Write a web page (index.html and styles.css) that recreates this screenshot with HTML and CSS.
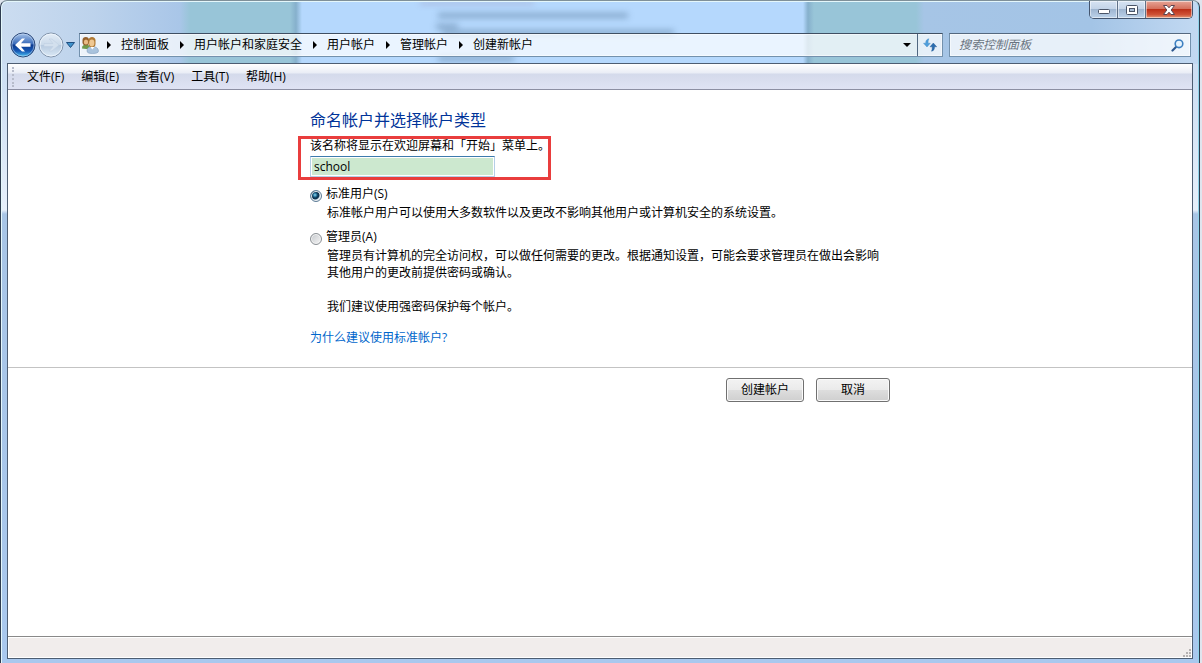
FILE: index.html
```html
<!DOCTYPE html>
<html lang="zh-CN">
<head>
    <meta charset="UTF-8">
    <meta name="viewport" content="width=device-width, initial-scale=1.0">
    <title>创建新帐户</title>
    <link rel="stylesheet" href="styles.css">
</head>
<body>
    <div class="window">
        <div class="glass">
            <span class="smudge smudge-a"></span>
            <span class="smudge smudge-b"></span>
            <span class="smudge smudge-c"></span>
            <span class="smudge smudge-d"></span>
            <span class="smudge smudge-e"></span>
        </div>

        <header class="titlebar">
            <div class="caption">
                <button type="button" class="caption-btn" aria-label="最小化">
                    <svg width="14" height="10" viewBox="0 0 14 10"><rect x="1.500" y="4.500" width="11" height="4" rx="1" fill="#fff" stroke="#4a5568"/></svg>
                </button>
                <button type="button" class="caption-btn" aria-label="最大化">
                    <svg width="14" height="10" viewBox="0 0 14 10"><rect x="1.500" y="0.500" width="11" height="9" rx="1" fill="#fff" stroke="#4a5568"/><rect x="4.500" y="3.500" width="5" height="3" fill="#a9bdd6" stroke="#4a5568"/></svg>
                </button>
                <button type="button" class="caption-btn close" aria-label="关闭">
                    <svg width="14" height="12" viewBox="0 0 14 12"><path d="M1.500 1.500h3.500l2 2.300 2-2.300h3.500L9.200 6l3.300 4.500H9L7 8.200 5 10.500H1.500L4.800 6z" fill="#fff" stroke="#5b4450"/></svg>
                </button>
            </div>
        </header>

        <div class="navbar">
            <div class="nav-buttons">
                <button type="button" class="round" aria-label="后退">
                    <svg width="26" height="26" viewBox="0 0 26 26">
                        <defs>
                            <linearGradient id="backFill" x1="0" y1="0" x2="0" y2="1">
                                <stop offset="0" stop-color="#a9c5ea"/>
                                <stop offset="0.450" stop-color="#3b6cba"/>
                                <stop offset="0.500" stop-color="#0c3a8f"/>
                                <stop offset="0.750" stop-color="#1658b5"/>
                                <stop offset="1" stop-color="#4fc8f5"/>
                            </linearGradient>
                        </defs>
                        <circle cx="13" cy="13" r="12" fill="url(#backFill)" stroke="#2c4878"/>
                        <circle cx="13" cy="13" r="11" fill="none" stroke="#cfe2f8" stroke-opacity="0.500"/>
                        <path d="M5 13l7-6.500h3l-4 4.700h9.500v3.600H11l4 4.700h-3z" fill="#fff"/>
                    </svg>
                </button>
                <button type="button" class="round" aria-label="前进">
                    <svg width="26" height="26" viewBox="0 0 26 26">
                        <defs>
                            <linearGradient id="fwdFill" x1="0" y1="0" x2="0" y2="1">
                                <stop offset="0" stop-color="#e4edf7"/>
                                <stop offset="0.480" stop-color="#cbdaea"/>
                                <stop offset="0.520" stop-color="#b8cbe0"/>
                                <stop offset="1" stop-color="#dbe9f6"/>
                            </linearGradient>
                        </defs>
                        <circle cx="13" cy="13" r="12" fill="url(#fwdFill)" stroke="#8193aa"/>
                        <circle cx="13" cy="13" r="11" fill="none" stroke="#f4f9ff" stroke-opacity="0.700"/>
                        <path d="M21 13l-7-6h-3l4 4.500H6v3h9L11 19h3z" fill="#d3e0ee" stroke="#bccde0" stroke-width="0.500"/>
                    </svg>
                </button>
                <button type="button" class="recent" aria-label="最近的页面">
                    <svg width="9" height="6" viewBox="0 0 9 6"><path d="M0.500 0.500h8L4.500 5.500z" fill="#3f93cc" stroke="#1f4e80"/></svg>
                </button>
            </div>

            <div class="address">
                <svg class="users" width="18" height="18" viewBox="0 0 18 18">
                    <path d="M1 12.500C1 9.500 2.500 8.500 5 8.500s4.500 1.500 4.500 5z" fill="#6f9a4c"/>
                    <path d="M1.500 4C1.500 2 3 1 4.800 1S8 2 8 4v2.500C8 8.500 6.500 9.500 4.800 9.500S1.500 8.500 1.500 6.500z" fill="#94602c"/>
                    <ellipse cx="5" cy="6" rx="2.200" ry="2.600" fill="#e9bb85"/>
                    <path d="M6 15c0-3.500 2.500-4.500 5.500-4.500s6 1.500 6 4.500c0 2-3 2.500-6 2.500S6 17 6 15z" fill="#a9c3dd" stroke="#7897b8" stroke-width="0.500"/>
                    <path d="M7.500 4.500C7.500 2.200 9 1 11 1s3.500 1.200 3.500 3.500V8c0 2-1.500 3.500-3.500 3.500S7.500 10 7.500 8z" fill="#b07a34"/>
                    <ellipse cx="10.800" cy="7" rx="2.600" ry="3.400" fill="#efc892"/>
                    <path d="M9.500 11l1.700 2.500L13.500 11z" fill="#fff"/>
                </svg>
                <nav class="crumbs">
                    <a href="#">控制面板</a>
                    <a href="#">用户帐户和家庭安全</a>
                    <a href="#">用户帐户</a>
                    <a href="#">管理帐户</a>
                    <a href="#">创建新帐户</a>
                </nav>
                <button type="button" class="drop" aria-label="以前的位置">
                    <svg width="8" height="4" viewBox="0 0 8 4"><path d="M0 0h8L4 4z" fill="#000"/></svg>
                </button>
                <button type="button" class="refresh" aria-label="刷新">
                    <svg width="14" height="14" viewBox="0 0 14 14">
                        <path d="M6 0.800C3.500 1.200 2.700 2.700 2.700 5.200H0.500L4 9l3.300-3.800H5.100C5 3.500 5.200 2 6 0.800z" fill="#4f9edb" stroke="#3a86c2" stroke-width="0.400"/>
                        <path d="M8.500 13.200c2.500-0.400 3-1.900 3-4.400h2.200L10.300 5 7 8.800h2.200c0 1.700 0 3.200-0.700 4.400z" fill="#2b6cae" stroke="#1d5391" stroke-width="0.400"/>
                    </svg>
                </button>
            </div>

            <form class="search">
                <input type="text" aria-label="搜索控制面板" placeholder="搜索控制面板">
                <svg width="13" height="13" viewBox="0 0 13 13">
                    <path d="M1.500 11.500L5.500 7.500" stroke="#2d568c" stroke-width="2.200" stroke-linecap="round"/>
                    <circle cx="8" cy="4.800" r="3.800" fill="#e6f3fd" stroke="#3c7fc0" stroke-width="1.600"/>
                </svg>
            </form>
        </div>

        <div class="client">
            <nav class="menubar">
                <button type="button">文件(F)</button>
                <button type="button">编辑(E)</button>
                <button type="button">查看(V)</button>
                <button type="button">工具(T)</button>
                <button type="button">帮助(H)</button>
            </nav>

            <main>
                <form class="account">
                    <section class="column">
                        <h1>命名帐户并选择帐户类型</h1>
                        <div class="name-field">
                            <label for="accountName">该名称将显示在欢迎屏幕和「开始」菜单上。</label>
                            <input type="text" id="accountName" name="accountName" value="school">
                        </div>

                        <div class="option">
                            <input type="radio" id="standard" name="type" checked>
                            <label for="standard">标准用户(S)</label>
                        </div>
                        <p>标准帐户用户可以使用大多数软件以及更改不影响其他用户或计算机安全的系统设置。</p>

                        <div class="option">
                            <input type="radio" id="admin" name="type">
                            <label for="admin">管理员(A)</label>
                        </div>
                        <p>管理员有计算机的完全访问权，可以做任何需要的更改。根据通知设置，可能会要求管理员在做出会影响<br>其他用户的更改前提供密码或确认。</p>
                        <p class="advice">我们建议使用强密码保护每个帐户。</p>

                        <a class="help" href="#">为什么建议使用标准帐户?</a>
                    </section>

                    <div class="actions">
                        <div class="column buttons">
                            <button type="button" class="create">创建帐户</button>
                            <button type="button">取消</button>
                        </div>
                    </div>
                </form>
            </main>

            <footer class="statusbar">
                <svg width="9" height="9" viewBox="0 0 9 9" fill="#b5b2b2">
                    <path d="M6 0h2v2H6zM3 3h2v2H3zM6 3h2v2H6zM0 6h2v2H0zM3 6h2v2H3zM6 6h2v2H6z"/>
                </svg>
            </footer>
        </div>
    </div>
</body>
</html>
```
FILE: styles.css
```css
* {
    box-sizing: border-box;
}
body {
    margin: 0;
    background: #dfe5ee;
    font-family: "Open Sans", "Noto Sans CJK SC", sans-serif;
    font-size: 12px;
    line-height: 16px;
    color: #000;
}
button, input {
    font: inherit;
    color: inherit;
}
button {
    padding: 0;
    border: none;
    background: none;
}
svg {
    display: block;
}

/* window frame */
.window {
    position: relative;
    display: flex;
    flex-direction: column;
    min-height: 100vh;
    margin-right: 2px;
    padding: 0 6px 4px;
    border: 1px solid #2f3c50;
    border-top-color: #7f9099;
    border-bottom: none;
    border-radius: 7px 7px 0 0;
    background: linear-gradient(#c8dbf0 0, #cfe0f4 90px, #e6effa 209px, #a8c5e6 213px, #a9c8ee 100%);
    box-shadow: inset 1px 1px #e4f7fb, inset -1px 0 #8fd3ea;
}
.glass {
    position: absolute;
    top: 1px;
    left: 1px;
    right: 1px;
    height: 62px;
    overflow: hidden;
    border-radius: 6px 6px 0 0;
    background: linear-gradient(90deg, #cbdcf0 0, #bdd3ec 90px, #a9c6e8 178px, #98c5d8 188px, #98c5d8 288px, #86b0cc 294px, #b5d8fd 300px, #b5d8fd 801px, #86b0cc 806px, #98c5d8 812px, #98c5d8 914px, #a6c5e6 922px, #a3c4e6 1090px, #c2d9f2 100%);
}
.smudge {
    position: absolute;
    height: 5px;
    background: #537596;
    opacity: 0.5;
    filter: blur(3px);
}
.smudge-a {
    top: 0;
    left: 418px;
    width: 114px;
    height: 2px;
    background: #8c6c92;
}
.smudge-b {
    top: 11px;
    left: 436px;
    width: 190px;
}
.smudge-c {
    top: 22px;
    left: 434px;
    width: 22px;
}
.smudge-d {
    top: 28px;
    left: 440px;
    width: 232px;
}
.smudge-e {
    top: 54px;
    left: 436px;
    width: 76px;
}

/* caption buttons */
.titlebar {
    position: relative;
    display: flex;
    justify-content: flex-end;
    height: 32px;
}
.caption {
    display: flex;
    height: 18px;
    border: 1px solid #44556e;
    border-top: none;
    border-radius: 0 0 5px 5px;
    overflow: hidden;
}
.caption-btn {
    display: flex;
    align-items: center;
    justify-content: center;
    width: 28px;
    border-right: 1px solid #5f7188;
    background: linear-gradient(#d6e3f2 0, #c3d4e8 45%, #9fb6d1 50%, #bcd2ea 100%);
    box-shadow: inset 0 0 0 1px rgba(255, 255, 255, 0.5);
}
.caption-btn.close {
    width: 46px;
    border-right: none;
    background: linear-gradient(#e6a597 0, #d5705c 45%, #bb3018 50%, #cf5236 80%, #e39a78 100%);
}

/* address row */
.navbar {
    position: relative;
    display: flex;
    align-items: center;
    height: 24px;
    margin-bottom: 6px;
    padding: 0 2px 0 3px;
}
.nav-buttons {
    display: flex;
    align-items: center;
    gap: 2px;
    width: 69px;
}
.round {
    flex: none;
    border-radius: 50%;
}
.address {
    display: flex;
    align-items: center;
    flex: 1;
    height: 24px;
    border: 1px solid #7391ad;
    border-top-color: #3f4f63;
    background: rgba(255, 255, 255, 0.72);
    box-shadow: inset 0 0 0 1px rgba(255, 255, 255, 0.5);
}
.users {
    margin-left: 1px;
}
.crumbs {
    display: flex;
    flex: 1;
}
.crumbs a {
    display: flex;
    align-items: center;
    color: #000;
    text-decoration: none;
}
.crumbs a::before {
    content: "";
    margin: 0 10px 0 8px;
    border: 4px solid transparent;
    border-left-color: #000;
    border-right: none;
}
.crumbs a + a::before {
    margin-left: 11px;
}
.drop, .refresh {
    display: flex;
    align-items: center;
    justify-content: center;
    height: 22px;
}
.drop {
    width: 20px;
}
.refresh {
    width: 25px;
    border-left: 1px solid #4f6780;
}
.search {
    display: flex;
    align-items: center;
    width: 242px;
    height: 24px;
    margin-left: 6px;
    padding-right: 6px;
    border: 1px solid #7391ad;
    border-top-color: #54687f;
    background: rgba(255, 255, 255, 0.74);
    box-shadow: inset 0 0 0 1px rgba(255, 255, 255, 0.5);
}
.search input {
    flex: 1;
    min-width: 0;
    padding: 0 9px;
    border: none;
    outline: none;
    background: none;
}
.search input::placeholder {
    color: #6a7480;
    font-style: italic;
}

/* client area */
.client {
    position: relative;
    display: flex;
    flex: 1;
    flex-direction: column;
    border: 1px solid #4d5d72;
    background: #fff;
}
.menubar {
    position: relative;
    display: flex;
    gap: 17px;
    height: 26px;
    padding-left: 19px;
    border-bottom: 1px solid #8c8fa3;
    background: linear-gradient(#fff 0, #e9edf6 9px, #d4daeb 10px, #dfe3f4 100%);
}
.menubar::before {
    content: "";
    position: absolute;
    top: 3px;
    bottom: 2px;
    left: 4px;
    border-left: 2px dotted #b7bccb;
}
main {
    flex: 1;
}
.column {
    width: 580px;
    max-width: 100%;
    margin: 0 auto;
}
.account > .column {
    padding: 18px 0 21px;
}
h1 {
    margin: 0 0 6px;
    color: #003399;
    font-size: 16px;
    font-weight: normal;
    line-height: 24px;
}
.name-field {
    position: relative;
    width: 241px;
    margin-bottom: 9px;
}
.name-field::after {
    content: "";
    position: absolute;
    inset: -2px 0 -3px -12px;
    border: 3px solid #e93d3d;
    pointer-events: none;
}
.name-field label {
    display: block;
    white-space: nowrap;
}
.name-field input {
    display: block;
    width: 185px;
    height: 21px;
    margin-top: 2px;
    padding: 0 3px;
    border: 1px solid #b5cfe7;
    border-top-color: #3d7bad;
    outline: none;
    background: #cce8cf;
    box-shadow: inset 0 0 0 1px #fff;
}
.option {
    display: flex;
    align-items: flex-end;
    gap: 4px;
    margin-bottom: 2px;
}
.option input {
    appearance: none;
    width: 12px;
    height: 12px;
    margin: 0;
    border: 1px solid #8a8f94;
    border-radius: 50%;
    background: linear-gradient(135deg, #c4c8cc, #f6f6f6);
    box-shadow: inset 0 0 0 1px #f4f4f4;
}
.option input:checked {
    border-color: #5d7c96;
    background: radial-gradient(circle at 4px 4px, #8fdcf5 0, #1c668f 2px, #0c3553 3px, #0c3553 4px, #d5e3ec 5px);
}
p {
    margin: 0 0 8px 17px;
    line-height: 17px;
}
.advice {
    margin: 17px 0 15px 17px;
}
.help {
    display: block;
    color: #0066cc;
    text-decoration: none;
}
.actions {
    padding-top: 10px;
    border-top: 1px solid #c3c3c3;
}
.buttons {
    display: flex;
    justify-content: flex-end;
    gap: 12px;
}
.buttons button {
    width: 74px;
    height: 24px;
    border: 1px solid #707070;
    border-radius: 3px;
    background: linear-gradient(#f3f3f3 0, #ebebeb 48%, #dddddd 52%, #cfcfcf 100%);
    box-shadow: inset 0 0 0 1px #fafafa;
}
.buttons .create {
    width: 78px;
}
.statusbar {
    display: flex;
    align-items: flex-end;
    justify-content: flex-end;
    height: 22px;
    border-top: 1px solid #898989;
    background: #f1edec;
    box-shadow: inset 0 0 0 1px #fff;
}
```
